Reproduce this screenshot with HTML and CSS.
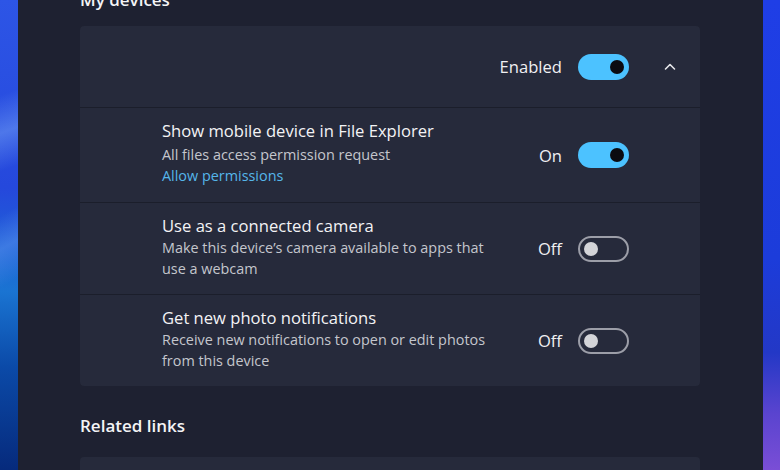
FILE: index.html
```html
<!DOCTYPE html>
<html lang="en">
<head>
<meta charset="utf-8">
<title>My devices</title>
<link rel="stylesheet" href="styles.css">
</head>
<body>
<div class="desktop">
  <div class="wall wall-left"></div>
  <main class="window">
    <div class="content">
      <h2 class="section-title">My devices</h2>
      <section class="card">
        <div class="row header-row">
          <span class="state">Enabled</span>
          <span class="toggle on"><span class="knob"></span></span>
          <span class="chevron">
            <svg width="14" height="14" viewBox="0 0 14 14"><path d="M2.5 9 L7 4.5 L11.5 9" fill="none" stroke="#e6e7ea" stroke-width="1.6" stroke-linecap="round" stroke-linejoin="round"/></svg>
          </span>
        </div>
        <div class="row setting first">
          <div class="text">
            <div class="title">Show mobile device in File Explorer</div>
            <div class="sub">All files access permission request</div>
            <a class="link" href="#">Allow permissions</a>
          </div>
          <span class="state">On</span>
          <span class="toggle on"><span class="knob"></span></span>
        </div>
        <div class="row setting">
          <div class="text">
            <div class="title">Use as a connected camera</div>
            <div class="sub">Make this device’s camera available to apps that<br>use a webcam</div>
          </div>
          <span class="state">Off</span>
          <span class="toggle off"><span class="knob"></span></span>
        </div>
        <div class="row setting">
          <div class="text">
            <div class="title">Get new photo notifications</div>
            <div class="sub">Receive new notifications to open or edit photos<br>from this device</div>
          </div>
          <span class="state">Off</span>
          <span class="toggle off"><span class="knob"></span></span>
        </div>
      </section>
      <h2 class="section-title related">Related links</h2>
      <section class="card stub"></section>
    </div>
  </main>
  <div class="wall wall-right"></div>
</div>
</body>
</html>
```
FILE: styles.css
```css
* { box-sizing: border-box; }
html, body { margin: 0; padding: 0; }
body {
  width: 780px;
  height: 470px;
  overflow: hidden;
  font-family: "Open Sans", "Noto Sans", sans-serif;
  color: #f2f2f4;
  background: #1e2131;
}
.desktop {
  display: flex;
  height: 470px;
}
.wall { flex: none; }
.wall-left {
  width: 18px;
  background:
    linear-gradient(160deg, transparent 20%, rgba(150,200,255,0.35) 28%, transparent 36%),
    linear-gradient(150deg, transparent 45%, rgba(130,180,255,0.3) 52%, transparent 60%),
    linear-gradient(180deg, #2d55e6 0%, #2548dc 40%, #1a74d2 62%, #0b4aa8 78%, #062a7c 100%);
}
.wall-right {
  width: 17px;
  background:
    linear-gradient(180deg, #1f3ee6 0%, #1c3cda 55%, #2338c6 75%, #5a44cf 88%, #7a4ed6 100%);
}
.window {
  flex: 1;
  background: #1e2131;
  padding: 0 63px 0 62px;
  overflow: hidden;
}
.content { margin-top: -11px; }
.section-title {
  margin: 0 0 15px;
  font-size: 17px;
  font-weight: 600;
  line-height: 22px;
  color: #f4f4f6;
}
.section-title.related { margin: 29px 0 20px; }
.card {
  background: #1b1e2b;
  border-radius: 4px;
  overflow: hidden;
  display: flex;
  flex-direction: column;
  gap: 1px;
}
.row {
  display: flex;
  align-items: center;
  background: #262a3b;
}
.header-row {
  height: 81px;
  justify-content: flex-end;
  padding-right: 20px;
}
.header-row .chevron {
  width: 20px;
  height: 20px;
  margin-left: 31px;
  display: flex;
  align-items: center;
  justify-content: center;
}
.setting {
  height: 91px;
  padding: 0 71px 0 82px;
}
.setting.first { height: 94px; }
.setting.first .sub { margin-top: 2px; }
.text {
  flex: 1;
  display: flex;
  flex-direction: column;
  margin-top: -4px;
}
.title {
  font-size: 16.6px;
  line-height: 22px;
  color: #f3f3f5;
}
.sub {
  font-size: 14.4px;
  line-height: 21px;
  color: #c4c6cd;
}
.link {
  font-size: 14.4px;
  line-height: 21px;
  color: #55b6ea;
  text-decoration: none;
}
.state {
  font-size: 16.6px;
  color: #f0f0f2;
  margin-right: 16px;
}
.toggle {
  flex: none;
  width: 51px;
  height: 26px;
  border-radius: 13px;
  display: flex;
  align-items: center;
}
.toggle .knob {
  width: 14px;
  height: 14px;
  border-radius: 50%;
}
.toggle.on {
  background: #4cc2ff;
  justify-content: flex-end;
  padding-right: 5px;
}
.toggle.on .knob { background: #0b0b10; }
.toggle.off {
  border: 2px solid #9c9ea8;
  padding-left: 4px;
}
.toggle.off .knob { background: #d3d4d8; }
.card.stub { height: 40px; border-radius: 4px 4px 0 0; background: #262a3b; }
```
